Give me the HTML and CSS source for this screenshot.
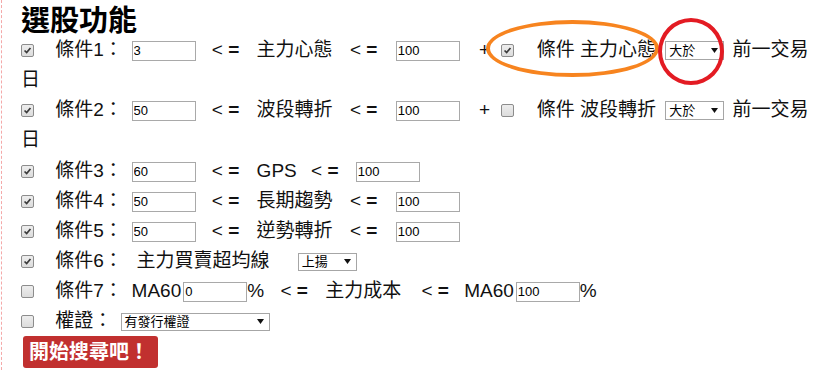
FILE: index.html
```html
<!DOCTYPE html>
<html lang="zh-Hant">

<head>
    <meta charset="UTF-8">
    <meta name="viewport" content="width=device-width, initial-scale=1.0">
    <title>選股功能</title>
    <link rel="stylesheet" href="styles.css">
</head>

<body>
    <div class="page">
        <h2 class="title">選股功能</h2>

        <div class="row">
            <span class="chk chk--on"><svg viewBox="0 0 13 13"><path d="M3 6.5 L5.5 9 L10 3.5" /></svg></span>
            <span class="lbl">條件1：</span>
            <input class="num" type="text" value="3">
            <span class="op">&lt; <b>=</b></span>
            <span class="name">主力心態</span>
            <span class="op op--2">&lt; <b>=</b></span>
            <input class="num num--2" type="text" value="100">
            <span class="plus">+</span>
            <span class="chk chk--on chk--plus"><svg viewBox="0 0 13 13"><path d="M3 6.5 L5.5 9 L10 3.5" /></svg></span>
            <span class="extra">條件 主力心態</span>
            <span class="select select--cmp">大於<svg viewBox="0 0 7 5"><polygon points="0,0 7,0 3.5,5" /></svg></span>
            <span class="after">前一交易日</span>
        </div>

        <div class="row">
            <span class="chk chk--on"><svg viewBox="0 0 13 13"><path d="M3 6.5 L5.5 9 L10 3.5" /></svg></span>
            <span class="lbl">條件2：</span>
            <input class="num" type="text" value="50">
            <span class="op">&lt; <b>=</b></span>
            <span class="name">波段轉折</span>
            <span class="op op--2">&lt; <b>=</b></span>
            <input class="num num--2" type="text" value="100">
            <span class="plus">+</span>
            <span class="chk chk--plus"></span>
            <span class="extra">條件 波段轉折</span>
            <span class="select select--cmp">大於<svg viewBox="0 0 7 5"><polygon points="0,0 7,0 3.5,5" /></svg></span>
            <span class="after">前一交易日</span>
        </div>

        <div class="row row--gap">
            <span class="chk chk--on"><svg viewBox="0 0 13 13"><path d="M3 6.5 L5.5 9 L10 3.5" /></svg></span>
            <span class="lbl">條件3：</span>
            <input class="num" type="text" value="60">
            <span class="op">&lt; <b>=</b></span>
            <span class="name">GPS</span>
            <span class="op op--gps">&lt; <b>=</b></span>
            <input class="num num--gps" type="text" value="100">
        </div>

        <div class="row">
            <span class="chk chk--on"><svg viewBox="0 0 13 13"><path d="M3 6.5 L5.5 9 L10 3.5" /></svg></span>
            <span class="lbl">條件4：</span>
            <input class="num" type="text" value="50">
            <span class="op">&lt; <b>=</b></span>
            <span class="name">長期趨勢</span>
            <span class="op op--2">&lt; <b>=</b></span>
            <input class="num num--2" type="text" value="100">
        </div>

        <div class="row">
            <span class="chk chk--on"><svg viewBox="0 0 13 13"><path d="M3 6.5 L5.5 9 L10 3.5" /></svg></span>
            <span class="lbl">條件5：</span>
            <input class="num" type="text" value="50">
            <span class="op">&lt; <b>=</b></span>
            <span class="name">逆勢轉折</span>
            <span class="op op--2">&lt; <b>=</b></span>
            <input class="num num--2" type="text" value="100">
        </div>

        <div class="row">
            <span class="chk chk--on"><svg viewBox="0 0 13 13"><path d="M3 6.5 L5.5 9 L10 3.5" /></svg></span>
            <span class="lbl">條件6：</span>
            <span class="line-name">主力買賣超均線</span>
            <span class="select select--up">上揚<svg viewBox="0 0 7 5"><polygon points="0,0 7,0 3.5,5" /></svg></span>
        </div>

        <div class="row">
            <span class="chk"></span>
            <span class="lbl">條件7：</span>
            <span class="ma">MA60<input class="num num--ma" type="text" value="0">%</span>
            <span class="op op--ma">&lt; <b>=</b></span>
            <span class="name">主力成本</span>
            <span class="op op--ma2">&lt; <b>=</b></span>
            <span class="ma ma--2">MA60<input class="num num--ma" type="text" value="100">%</span>
        </div>

        <div class="row">
            <span class="chk"></span>
            <span class="lbl lbl--short">權證：</span>
            <span class="select select--warrant">有發行權證<svg viewBox="0 0 7 5"><polygon points="0,0 7,0 3.5,5" /></svg></span>
        </div>

        <button class="btn" type="button">開始搜尋吧！</button>
    </div>

    <div class="mark mark--orange"></div>
    <div class="mark mark--red"></div>
</body>

</html>
```

FILE: styles.css
```css
* {
    padding: 0;
    margin: 0;
    box-sizing: border-box;
}

body {
    font-family: "Liberation Sans", "Noto Sans CJK TC", sans-serif;
    color: #111;
    font-size: 19px;
    background: #fff;
}

.page {
    min-height: 370px;
    margin-left: 1px;
    padding: 0 8px 0 19px;
    border-left: 1px dashed #f4a9a9;
}

.title {
    height: 35px;
    padding-top: 7px;
    font-size: 29px;
    line-height: 28px;
    font-weight: bold;
    color: #000;
}

.row {
    line-height: 30px;
}

.row--gap {
    margin-top: 1px;
}

/* checkbox look */
.chk {
    display: inline-block;
    width: 13px;
    height: 13px;
    vertical-align: middle;
    border: 1px solid #8c8c8c;
    border-radius: 2px;
    background: linear-gradient(#ededed, #dcdcdc);
}

.chk svg {
    display: block;
    width: 11px;
    height: 11px;
}

.chk svg path {
    fill: none;
    stroke: #3a3a3a;
    stroke-width: 2;
}

.chk--plus {
    margin-left: 6px;
}

.lbl {
    display: inline-block;
    width: 71px;
    margin-left: 16px;
}

.lbl--short {
    width: 60px;
}

.num {
    width: 64px;
    height: 20px;
    padding: 0 1px;
    vertical-align: middle;
    border: 1px solid #a9a9a9;
    font-family: "Liberation Sans", sans-serif;
    font-size: 13px;
    color: #000;
    outline: none;
}

.num--2 {
    margin-left: 13px;
}

.num--gps {
    margin-left: 12px;
}

.num--ma {
    margin: 0 0 0 2px;
    width: 64px;
}

.op {
    margin-left: 11px;
}

.op b {
    font-weight: bold;
}

.op--2 {
    margin-left: 12px;
}

.op--gps {
    margin-left: 9px;
}

.op--ma {
    margin-left: 11px;
}

.op--ma2 {
    margin-left: 15px;
}

.name {
    margin-left: 12px;
}

.plus {
    margin-left: 14px;
}

.extra {
    margin-left: 17px;
}

.after {
    margin-left: 3px;
}

.line-name {
    margin-left: 5px;
}

.ma--2 {
    margin-left: 10px;
}

/* select look */
.select {
    display: inline-flex;
    align-items: center;
    justify-content: space-between;
    height: 19px;
    padding: 0 5px 0 3px;
    vertical-align: middle;
    border: 1px solid #a6a6a6;
    background: #fff;
    font-size: 13px;
    line-height: 17px;
    color: #000;
}

.select svg {
    width: 7px;
    height: 5px;
}

.select svg polygon {
    fill: #111;
}

.select--cmp {
    width: 59px;
    margin-left: 4px;
}

.select--up {
    width: 59px;
    height: 18px;
    margin-left: 23px;
}

.select--warrant {
    width: 149px;
    height: 18px;
}

.btn {
    display: block;
    height: 32px;
    margin-left: 2px;
    padding: 0 9px 0 6px;
    border: none;
    border-radius: 3px;
    background-color: #c1302f;
    color: #fff;
    font-family: "Liberation Sans", "Noto Sans CJK TC", sans-serif;
    font-size: 20px;
    font-weight: bold;
    line-height: 32px;
}

/* hand drawn marks */
.mark {
    position: absolute;
    border-radius: 50%;
}

.mark--orange {
    left: 486px;
    top: 20px;
    width: 173px;
    height: 57px;
    border: 4px solid #f7841f;
}

.mark--red {
    left: 658px;
    top: 18px;
    width: 66px;
    height: 67px;
    border: 4px solid #e31b23;
}
```
